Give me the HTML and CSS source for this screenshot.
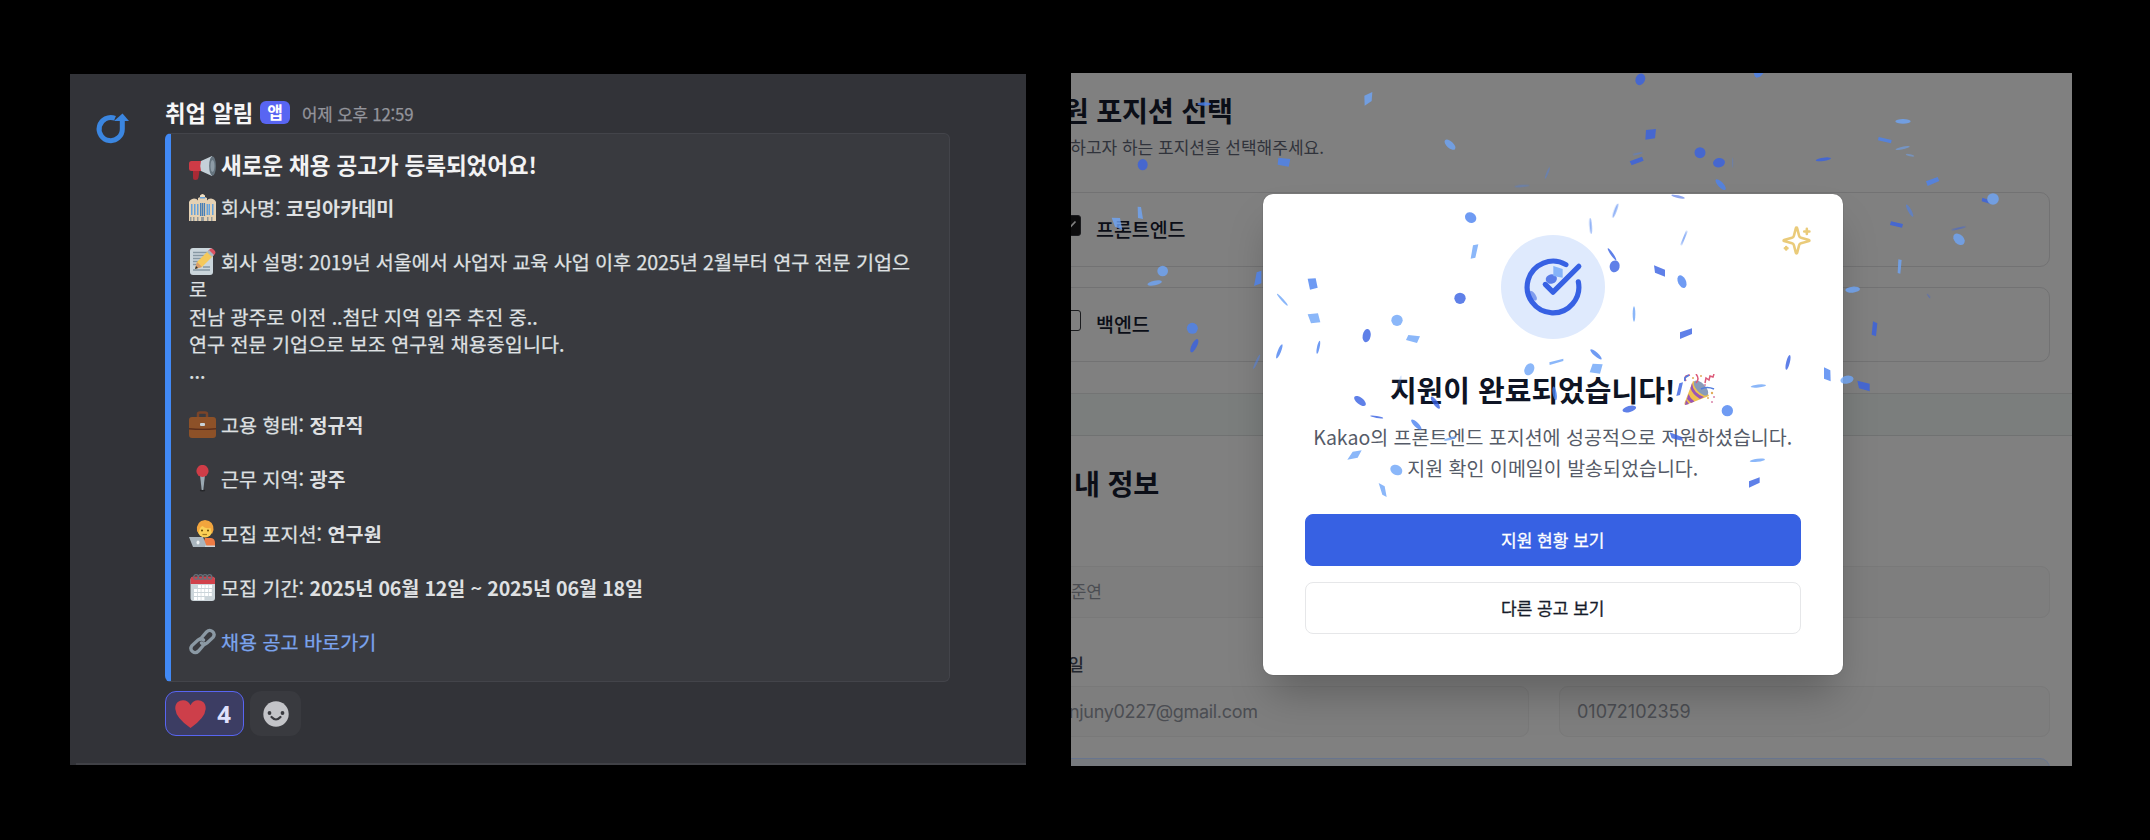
FILE: index.html
```html
<!DOCTYPE html>
<html lang="ko">
<head>
<meta charset="utf-8">
<title>취업 알림</title>
<link rel="stylesheet" href="styles.css">
</head>
<body>
<main class="stage">
  <section class="chat">
    <div class="avatar">
      <svg width="34" height="32" viewBox="0 0 34 32"><path d="M20 6.300A11.600 11.600 0 1 0 27.300 17V8" fill="none" stroke="#3b86e0" stroke-width="5"/><path d="M19 9 27.500 1.500 34 9z" fill="#3b86e0"/></svg>
    </div>
    <div class="message">
      <header class="msg-head">
        <span class="name">취업 알림</span><span class="tag">앱</span><time class="time">어제 오후 12:59</time>
      </header>
      <article class="embed">
        <h2 class="embed-title">
          <svg class="emoji" viewBox="0 0 27 27"><path d="M4 14h7l-1.500 10.500Q9.200 27 6.500 27T4 24.500z" fill="#a92a35"/><path d="M2.500 8H14v10H2.500Q0 18 0 15.500v-5Q0 8 2.500 8z" fill="#ce3b46"/><path d="M12 8 23 3v20l-11-5Q10.500 13 12 8z" fill="#c5d0d8"/><ellipse cx="23.500" cy="13" rx="3.400" ry="9.800" fill="#65737e"/><ellipse cx="23.500" cy="13" rx="2" ry="6" fill="#8d9ba6"/></svg><span>새로운 채용 공고가 등록되었어요!</span>
        </h2>
        <div class="lines">
          <p class="line"><svg class="emoji" viewBox="0 0 27 27"><path d="M0 8q1-3 5-3.500 3 0 4 2V4q4.500-3 9 0v2.500q1-2 4-2 4 .500 5 3.500v19H0z" fill="#e5d1b3"/><path d="M11 1.500q2.500-3 5 0V4h-5z" fill="#f2dfc0"/><path d="M11 3h5v1.500h-5zM2 10h1.500v11H2zm3 0h1.500v11H5zm14.500 0H21v11h-1.500zm3.500 0h1.500v11H23zM8 10h1.500v11H8zm9.500 0H19v11h-1.500z" fill="#65a2dc"/><path d="M11 9h1.300v13H11zm1.800 0h1.400v13h-1.400zm2 0h1.300v13h-1.300z" fill="#487eb5"/><path d="M1 23h1.500v4H1zm3 0h1.500v4H4zm4 0h1.500v4H8zm10 0h1.500v4H18zm4 0h1.500v4H22zm-10 0h3v4h-3z" fill="#91999c"/></svg><span>회사명: <b>코딩아카데미</b></span></p>
          <p class="line"></p>
          <p class="line"><svg class="emoji" viewBox="0 0 27 27"><rect x="1" y="0" width="23" height="27" rx="3" fill="#cbd6dc"/><path d="M4 4.500h14M4 7.500h12M4 10.500h10M4 13.500h7M4 16.500h4M14 19h7M4 22h17" stroke="#8798a3" stroke-width="1.300"/><path d="m6 21 2-7L19 3l5 5-11 11z" fill="#f5c95b"/><path d="m19 3 2-2q1.500-1 3 0l2 2q1 1.500 0 3l-2 2z" fill="#dc5361"/><path d="m18 4 2-2 5 5-2 2z" fill="#aab8c2"/><path d="m6 21 2-7 5 5z" fill="#d79b6b"/><path d="m6 21 1-3 2 2z" fill="#292f33"/></svg><span class="intro">회사 설명: 2019년 서울에서 사업자 교육 사업 이후 2025년 2월부터 연구 전문 기업으</span></p>
          <p class="line">로</p>
          <p class="line">전남 광주로 이전 ..첨단 지역 입주 추진 중..</p>
          <p class="line">연구 전문 기업으로 보조 연구원 채용중입니다.</p>
          <p class="line">...</p>
          <p class="line"></p>
          <p class="line"><svg class="emoji" viewBox="0 0 27 27"><path d="M9 6V3q0-1.500 2-1.500h5q2 0 2 1.500v3" fill="none" stroke="#7b4428" stroke-width="2.500"/><rect y="6" width="27" height="21" rx="3" fill="#8d5128"/><path d="M0 17q13.500 1.500 27 0v1.500q-13.500 1-27 0z" fill="#5c2f1c"/><rect x="11" y="12" width="5" height="3" rx="1" fill="#c9d3d9"/></svg><span>고용 형태: <b>정규직</b></span></p>
          <p class="line"></p>
          <p class="line"><svg class="emoji" viewBox="0 0 27 27"><ellipse cx="13.500" cy="25.500" rx="2.800" ry="1" fill="#26272b"/><path d="M11 10h5l-1.700 15h-1.600z" fill="#9aa8b2"/><circle cx="13.500" cy="6" r="6.100" fill="#cf3c47"/></svg><span>근무 지역: <b>광주</b></span></p>
          <p class="line"></p>
          <p class="line"><svg class="emoji" viewBox="0 0 27 27"><path d="M16 18h6q4 .500 4 5v4H13z" fill="#ee7b45"/><circle cx="16" cy="10" r="7.500" fill="#fbcf56"/><path d="M8 11Q7 1 16 0q9 1 8.500 10l-1.500 4-1.500-6q-5 1-8-2-3 1-4 7z" fill="#f2a53d"/><circle cx="13" cy="10.500" r="1" fill="#664500"/><circle cx="19" cy="10.500" r="1" fill="#664500"/><path d="M13.500 14.500h4.500" stroke="#a67a20" stroke-width="1.200"/><path d="M0 17h14l4 10H4z" fill="#a9b5be"/><ellipse cx="9" cy="22.500" rx="1.500" ry="2" fill="#eef2f4"/><path d="M16 25.500h10V27H16z" fill="#ccd6dd"/></svg><span>모집 포지션: <b>연구원</b></span></p>
          <p class="line"></p>
          <p class="line"><svg class="emoji" viewBox="0 0 27 27"><rect x="1.500" y="3" width="24.500" height="24" rx="3" fill="#ccd5da"/><path d="M1.500 10V6q0-3.500 3-3.500h18.500q3 0 3 3.500v4z" fill="#d1414b"/><g fill="none" stroke="#66717a" stroke-width="1.300"><circle cx="7" cy="3" r="2.300"/><circle cx="11.500" cy="3" r="2.300"/><circle cx="16" cy="3" r="2.300"/><circle cx="20.500" cy="3" r="2.300"/></g><path d="M9 12.500h14M5 16.500h18M5 20.500h18M5 24.500h11" stroke="#fff" stroke-width="3.200" stroke-dasharray="3 .7"/></svg><span>모집 기간: <b class="period">2025년 06월 12일 ~ 2025년 06월 18일</b></span></p>
          <p class="line"></p>
          <p class="line"><svg class="emoji" viewBox="0 0 27 27"><g fill="none" stroke="#8b99a4" stroke-width="3.300" stroke-linecap="round"><path d="M11 11.500 17.500 4q3-3 6-.500t.500 6L18 15q-3 2.500-5.500 0"/><path d="M16 15.500 9.500 23q-3 3-6 .500t-.500-6L9 12q3-2.500 5.500 0"/></g></svg><a class="link">채용 공고 바로가기</a></p>
        </div>
      </article>
      <div class="reactions">
        <span class="reaction mine"><svg width="31" height="28" viewBox="0 0 31 28"><path d="M15.500 28Q1 18 .300 9C0 3 4 .300 8 .300q5 0 7.500 5 2.500-5 7.500-5c4 0 8 2.700 7.700 8.700Q30 18 15.500 28z" fill="#cd3f4a"/></svg><span>4</span></span>
        <span class="reaction"><svg width="26" height="26" viewBox="0 0 26 26"><circle cx="13" cy="13" r="12.700" fill="#c3c4c8"/><circle cx="6.500" cy="12" r="1.900" fill="#3a3b40"/><circle cx="19.500" cy="12" r="1.900" fill="#3a3b40"/><path d="M8.500 16q4.500 5 9 0" fill="none" stroke="#3a3b40" stroke-width="2.200" stroke-linecap="round"/></svg></span>
      </div>
    </div>
    <div class="rule"></div>
  </section>

  <section class="apply">
    <div class="form">
      <div class="positions">
        <h1 class="heading">지원 포지션 선택</h1>
        <p class="hint">지원하고자 하는 포지션을 선택해주세요.</p>
        <div class="option"><span class="box checked"><svg width="14" height="14" viewBox="0 0 14 14"><path d="M1.500 8 5 11.500 12.500 3.500" fill="none" stroke="#808080" stroke-width="1.700"/></svg></span>프론트엔드</div>
        <div class="option"><span class="box"></span>백엔드</div>
      </div>
      <div class="band"></div>
      <div class="info">
        <h1 class="heading">내 정보</h1>
        <div class="field name-field">이준연</div>
        <div class="label">이메일</div>
        <div class="pair"><div class="field mail">njuny0227@gmail.com</div><div class="field phone">01072102359</div></div>
        <div class="notice"></div>
      </div>
    </div>

    <div class="modal">
      <svg class="sparkles" width="31" height="31" viewBox="0 0 24 24" fill="none" stroke="#eacb7a" stroke-width="2" stroke-linecap="round" stroke-linejoin="round"><path d="M9.937 15.500A2 2 0 0 0 8.500 14.063l-6.135-1.582a.5.5 0 0 1 0-.962L8.500 9.936A2 2 0 0 0 9.937 8.500l1.582-6.135a.5.5 0 0 1 .963 0L14.063 8.500A2 2 0 0 0 15.500 9.937l6.135 1.581a.5.5 0 0 1 0 .964L15.500 14.063a2 2 0 0 0-1.437 1.437l-1.582 6.135a.5.5 0 0 1-.963 0z"/><path d="M20 3v4M22 5h-4M4 17v2M5 18H3"/></svg>
      <div class="badge"><svg width="62" height="62" viewBox="0 0 24 24" fill="none" stroke="#3761e3" stroke-width="2" stroke-linecap="round" stroke-linejoin="round"><path d="M21.801 10A10 10 0 1 1 17 3.335"/><path d="m9 11 3 3L22 4"/></svg></div>
      <h2 class="done"><span>지원이 완료되었습니다!</span><svg width="32" height="32" viewBox="0 0 32 32"><path d="M9 7Q20 9 25 22L1.500 31Q0 31 .500 29z" fill="#efc04d"/><path d="M8 9q1 10 12 14l-4 2Q8 20 6.500 14zM4.500 20q2 5 6 7.500l-3.500 1.500-4-4zM2 26l3 4-4 1z" fill="#9a55b5"/><ellipse cx="17" cy="14" rx="4.500" ry="9.500" transform="rotate(-43 17 14)" fill="#899bb9"/><path d="M2 7q-2-3 0-5l4-1M12 9q4-4 0-9M21 9l1-5 3 2 1-4 3 1 1-3" fill="none" stroke="#dc5878" stroke-width="1.500"/><path d="M1 7q-1-3 1-4l3-2M17 15q6-3 13 0" fill="none" stroke="#527ddf" stroke-width="1.700"/><g fill="#e2ac5a"><circle cx="17" cy="2" r="1"/><circle cx="28" cy="19" r="1.200"/><circle cx="24" cy="24" r="1"/><circle cx="9" cy="4" r="1"/></g><g fill="#d985aa"><circle cx="28" cy="28" r="1"/><circle cx="21" cy="11" r="1"/><circle cx="30" cy="23" r="1"/></g></svg></h2>
      <p class="desc">Kakao의 프론트엔드 포지션에 성공적으로 지원하셨습니다.<br>지원 확인 이메일이 발송되었습니다.</p>
      <a class="btn primary">지원 현황 보기</a>
      <a class="btn">다른 공고 보기</a>
    </div>

    <svg class="confetti" viewBox="1071 73 1001 693">
      <g transform="translate(1060 60) scale(.33333)">
        <g class="c-dark"><ellipse cx="248" cy="314" rx="15" ry="17"/><ellipse cx="403" cy="857" rx="8" ry="22" transform="rotate(27 403 857)"/><ellipse cx="920" cy="827" rx="12" ry="20" transform="rotate(10 920 827)"/><ellipse cx="900" cy="1023" rx="10" ry="21" transform="rotate(-52 900 1023)"/><ellipse cx="1126" cy="1028" rx="7" ry="22" transform="rotate(-35 1126 1028)"/><ellipse cx="950" cy="1071" rx="20" ry="3" transform="rotate(10 950 1071)"/></g>
        <g class="c-mid"><ellipse cx="433" cy="132" rx="21" ry="5"/><path d="M655 293 691 297 686 320 653 314zM590 637l14-5v38l-22 8zM743 656l24-1 6 28-23 6z"/><circle cx="397" cy="805" r="16.500"/><ellipse cx="590" cy="905" rx="3.500" ry="24" transform="rotate(25 590 905)" opacity=".6"/><ellipse cx="658" cy="874" rx="5" ry="23" transform="rotate(22 658 874)"/><ellipse cx="775" cy="862" rx="4" ry="20" transform="rotate(12 775 862)"/><ellipse cx="1069" cy="1094" rx="7" ry="21" transform="rotate(-45 1069 1094)"/></g>
        <g class="c-light"><path d="M913 107 937 96 935 123 914 137zM155 473l25 1 7 36-22-10zM233 440l10 1 6 36-15-3zM743 763l31-3 7 27-28 3zM1045 825l35 4-9 20-33-9z"/><circle cx="308" cy="633" r="16"/><circle cx="1011" cy="781" r="17"/><ellipse cx="284" cy="669" rx="22" ry="7" transform="rotate(-12 284 669)"/><ellipse cx="667" cy="719" rx="3.500" ry="24" transform="rotate(-42 667 719)"/><ellipse cx="1018" cy="968" rx="4" ry="22" transform="rotate(15 1018 968)" opacity=".4"/></g>
      </g>
      <g transform="translate(1400 60) scale(.33333)">
        <g class="c-dark"><ellipse cx="721" cy="58" rx="14" ry="18" transform="rotate(25 721 58)"/><path d="M738 210l30-3-3 28-29 4zM689 304l37-14 5 12-36 14zM762 616l33 13v21l-30-12zM840 817l36-12v17l-36 15zM838 970l11-3-9 38-11 3z"/><circle cx="900" cy="278" r="16.500"/><ellipse cx="957" cy="308" rx="18" ry="14" transform="rotate(-10 957 308)"/><ellipse cx="644" cy="619" rx="15" ry="18" transform="rotate(15 644 619)"/><ellipse cx="636" cy="583" rx="4" ry="22" transform="rotate(-35 636 583)"/><circle cx="180" cy="715" r="17"/><ellipse cx="454" cy="657" rx="17" ry="14" transform="rotate(-15 454 657)"/><ellipse cx="399" cy="707" rx="8" ry="17" transform="rotate(-35 399 707)" opacity=".7"/><ellipse cx="688" cy="1047" rx="21" ry="9" transform="rotate(-15 688 1047)"/><ellipse cx="834" cy="410" rx="21" ry="4" transform="rotate(13 834 410)" opacity=".7"/></g>
        <g class="c-mid"><path d="M1062 39h28q-8 14-21 14-8-6-7-14z"/><ellipse cx="962" cy="374" rx="8" ry="21" transform="rotate(-43 962 374)"/><ellipse cx="212" cy="473" rx="15" ry="18" transform="rotate(-55 212 473)"/><ellipse cx="846" cy="665" rx="12" ry="20" transform="rotate(-25 846 665)"/><ellipse cx="588" cy="883" rx="6" ry="22" transform="rotate(-49 588 883)"/><circle cx="982" cy="1052" r="17"/><ellipse cx="464" cy="1000" rx="6" ry="21" transform="rotate(-10 464 1000)"/><g opacity=".75"><ellipse cx="646" cy="452" rx="4" ry="23" transform="rotate(20 646 452)"/><ellipse cx="572" cy="498" rx="3.500" ry="24" transform="rotate(-4 572 498)"/><ellipse cx="852" cy="534" rx="3" ry="24" transform="rotate(22 852 534)"/></g><g opacity=".5"><ellipse cx="366" cy="378" rx="23" ry="3" transform="rotate(-5 366 378)"/><ellipse cx="442" cy="339" rx="3" ry="19" transform="rotate(22 442 339)"/><ellipse cx="713" cy="281" rx="15" ry="3" transform="rotate(-12 713 281)"/><ellipse cx="998" cy="308" rx="1.500" ry="15"/></g></g>
        <g class="c-light"><ellipse cx="150" cy="254" rx="10" ry="20" transform="rotate(-48 150 254)"/><path d="M219 556l16-3-9 40-14 3zM460 618l28 9v26l-28-5zM448 907l42-11v7l-41 12zM578 911l30 2-8 28-31-4z"/><ellipse cx="702" cy="762" rx="4" ry="23"/><ellipse cx="388" cy="928" rx="14" ry="19" transform="rotate(28 388 928)"/><ellipse cx="1075" cy="978" rx="23" ry="4.500" transform="rotate(-6 1075 978)"/></g>
      </g>
      <g transform="translate(1740 60) scale(.33333)">
        <g class="c-dark"><ellipse cx="250" cy="298" rx="23" ry="5" transform="rotate(-8 250 298)"/><path d="M453 484l36 8-3 11-36-8zM727 413l28 9-3 10-27-8zM399 784l13 6-4 39-13-5zM352 962l37 9v23l-32-9z"/><ellipse cx="144" cy="907" rx="5.500" ry="23" transform="rotate(14 144 907)"/><g opacity=".6"><ellipse cx="656" cy="505" rx="22" ry="3" transform="rotate(-13 656 505)"/><ellipse cx="566" cy="708" rx="2" ry="8" transform="rotate(-35 566 708)"/></g></g>
        <g class="c-mid"><path d="M416 231l39 9-2 10-39-9zM558 364l35-13 5 12-35 15zM252 922l19 9 1 33-20-8z"/><ellipse cx="509" cy="452" rx="5" ry="21" transform="rotate(-29 509 452)" opacity=".7"/></g>
        <g class="c-light"><ellipse cx="489" cy="184" rx="23" ry="7"/><ellipse cx="488" cy="264" rx="22" ry="3.500" transform="rotate(-12 488 264)" opacity=".7"/><ellipse cx="510" cy="286" rx="13" ry="3" transform="rotate(13 510 286)" opacity=".6"/><circle cx="759" cy="417" r="17.500"/><ellipse cx="657" cy="538" rx="14" ry="20" transform="rotate(-45 657 538)"/><path d="M475 598l10 2-4 41-8-2z"/><ellipse cx="338" cy="689" rx="22" ry="9" transform="rotate(-5 338 689)"/><ellipse cx="321" cy="959" rx="20" ry="12" transform="rotate(-12 321 959)"/></g>
      </g>
      <g transform="translate(1060 400) scale(.33333)" class="c-light"><path d="M878 155l27-4-12 22-31 6zM956 249l18 10 6 32-13-7z"/><ellipse cx="1009" cy="210" rx="19" ry="15" transform="rotate(30 1009 210)"/></g>
      <g transform="translate(1400 400) scale(.33333)">
        <path class="c-dark" d="M1047 244l32-12v16l-32 15zM809 97l37 14 3 12-34-8z"/>
        <g class="c-light"><ellipse cx="1072" cy="181" rx="23" ry="4.500" transform="rotate(-7 1072 181)"/><ellipse cx="150" cy="116" rx="19" ry="4" transform="rotate(-15 150 116)"/></g>
      </g>
    </svg>
  </section>
</main>
</body>
</html>
```
FILE: styles.css
```css
* { box-sizing: border-box; margin: 0; padding: 0; }
body {
  background: #000;
  font-family: "Noto Sans CJK KR", "Noto Sans", sans-serif;
}
svg { display: block; flex: none; }
.stage {
  width: 2150px;
  height: 840px;
  padding: 73px 78px 0 70px;
  display: flex;
  justify-content: space-between;
  align-items: flex-start;
  overflow: hidden;
}

/* chat message */
.chat {
  width: 956px;
  height: 691px;
  margin-top: 1px;
  background: #323338;
  display: grid;
  grid-template-columns: 95px 1fr;
  grid-template-rows: 1fr 2px;
  white-space: nowrap;
}
.avatar { padding: 38px 0 0 25px; }
.msg-head {
  height: 59px;
  padding-top: 17px;
  display: flex;
  align-items: center;
}
.name { font-size: 22.300px; font-weight: 600; color: #f6f6f7; width: 95px; }
.tag {
  width: 30px;
  height: 23px;
  border-radius: 6px;
  background: #5865f2;
  color: #fff;
  font-size: 17px;
  font-weight: 700;
  line-height: 21px;
  text-align: center;
}
.time { margin: 4px 0 0 12px; font-size: 16.8px; color: #94959c; letter-spacing: -.15px; -webkit-text-stroke: .25px; }
.embed {
  width: 785px;
  height: 549px;
  border: 1px solid #43444a;
  border-left: 6px solid #4189f5;
  border-radius: 6px;
  background: #393a3f;
  padding: 16px 0 0 18px;
  color: #dfe0e2;
}
.embed-title {
  display: flex;
  gap: 5px;
  height: 30px;
  line-height: 30px;
  font-size: 22.6px;
  font-weight: 700;
  letter-spacing: -.15px;
  color: #f2f2f3;
}
.embed-title .emoji { margin-top: 3px; }
.emoji { width: 27px; height: 27px; }
.lines { margin-top: 14px; }
.line {
  height: 27.125px;
  line-height: 27px;
  display: flex;
  gap: 5px;
  font-size: 19.6px;
  -webkit-text-stroke: .25px;
}
.intro { letter-spacing: -.06px; }
.line b { -webkit-text-stroke: 0; }
.period { letter-spacing: -.15px; }
.link { color: #7ba4ee; }
.reactions { display: flex; gap: 6px; margin-top: 9px; }
.reaction {
  width: 51px;
  height: 45px;
  border-radius: 11px;
  background: #393a3f;
  display: flex;
  align-items: center;
  justify-content: center;
}
.mine {
  width: 79px;
  gap: 11px;
  padding-right: 3px;
  border: 1.500px solid #5865f2;
  background: #3c3d63;
  color: #dfe0fc;
  font: 700 24px "Noto Sans", sans-serif;
}
.rule { grid-column: 1 / 3; margin-left: 6px; background: #404146; }

/* application form */
.apply {
  position: relative;
  width: 1001px;
  height: 693px;
  overflow: hidden;
  background: #808080;
  white-space: nowrap;
}
.form { color: #0b0e17; }
.positions { height: 321px; padding-top: 15px; border-bottom: 1px solid #737474; }
.heading { font-size: 28.300px; font-weight: 600; line-height: 44px; letter-spacing: -.25px; }
.positions .heading { margin-left: -34px; }
.hint { margin: 2px 0 32px -32px; font-size: 17px; line-height: 26px; color: #30333b; }
.option {
  height: 75px;
  margin: 0 22px 20px -20px;
  padding: 0 0 2px 8px;
  border: 1px solid #727273;
  border-radius: 10px;
  display: flex;
  align-items: center;
  gap: 15px;
  font-size: 19.500px;
  font-weight: 500;
  letter-spacing: -.05px;
}
.box { width: 21px; height: 21px; border: 1.500px solid #1b1c1f; border-radius: 3px; margin-bottom: 6px; }
.checked { background: #0b0b0c; padding: 2px; }
.band { height: 42px; background: #7b7e7d; border-bottom: 1px solid #707272; }
.info { padding-top: 25px; }
.info .heading { margin-left: 3px; }
.field {
  height: 52px;
  border: 1px solid #797979;
  border-radius: 9px;
  background: #7e7e7e;
  color: #4b4d52;
  font-size: 17px;
  line-height: 48px;
}
.name-field { margin: 61px 22px 0 -30px; padding-left: 13px; }
.label { margin: 32px 0 0 -34px; font-size: 17px; font-weight: 500; line-height: 28px; color: #23262e; }
.pair { display: grid; grid-template-columns: 478px 491px; gap: 30px; margin: 8px 0 0 -20px; }
.pair .field { height: 51px; line-height: 50px; font-family: Inter, sans-serif; font-size: 18px; }
.mail { padding-left: 17px; letter-spacing: -.32px; }
.phone { padding-left: 17px; }
.notice { height: 60px; margin: 21px 22px 0 -20px; border: 1px solid #68758f; border-radius: 10px; background: #777a7e; }

/* completion dialog */
.modal {
  position: absolute;
  left: 191.500px;
  top: 120.500px;
  width: 580.500px;
  height: 481.500px;
  padding: 41px 42px 0;
  border-radius: 10px;
  background: #fff;
  box-shadow: 0 25px 40px -8px rgba(0, 0, 0, .25), 0 0 1px rgba(0, 0, 0, .5);
  text-align: center;
}
.sparkles { position: absolute; right: 31.500px; top: 31px; }
.badge {
  width: 104px;
  height: 104px;
  margin: 0 auto;
  border-radius: 50%;
  background: #dfeafd;
  display: flex;
  align-items: center;
  justify-content: center;
}
.done {
  display: flex;
  justify-content: center;
  gap: 8px;
  margin-top: 28px;
  height: 44px;
  line-height: 44px;
  font-size: 29px;
  font-weight: 600;
  color: #0e1424;
}
.done svg { margin-top: 7px; }
.desc { margin: 10px -10px 0; font-size: 19.500px; line-height: 31px; color: #555b68; }
.btn {
  display: block;
  height: 52px;
  margin-top: 16px;
  border: 1px solid #e6e7e9;
  border-radius: 8px;
  font-size: 17px;
  line-height: 49px;
  color: #161b29;
  -webkit-text-stroke: .3px;
}
.primary { margin-top: 31px; background: #3761e3; border-color: #3761e3; color: #fff; }
.confetti { position: absolute; left: 0; top: 0; width: 1001px; height: 693px; opacity: .8; }
.c-dark { fill: #3761e3; }
.c-mid { fill: #4b82f1; }
.c-light { fill: #6ea5f8; }
```
